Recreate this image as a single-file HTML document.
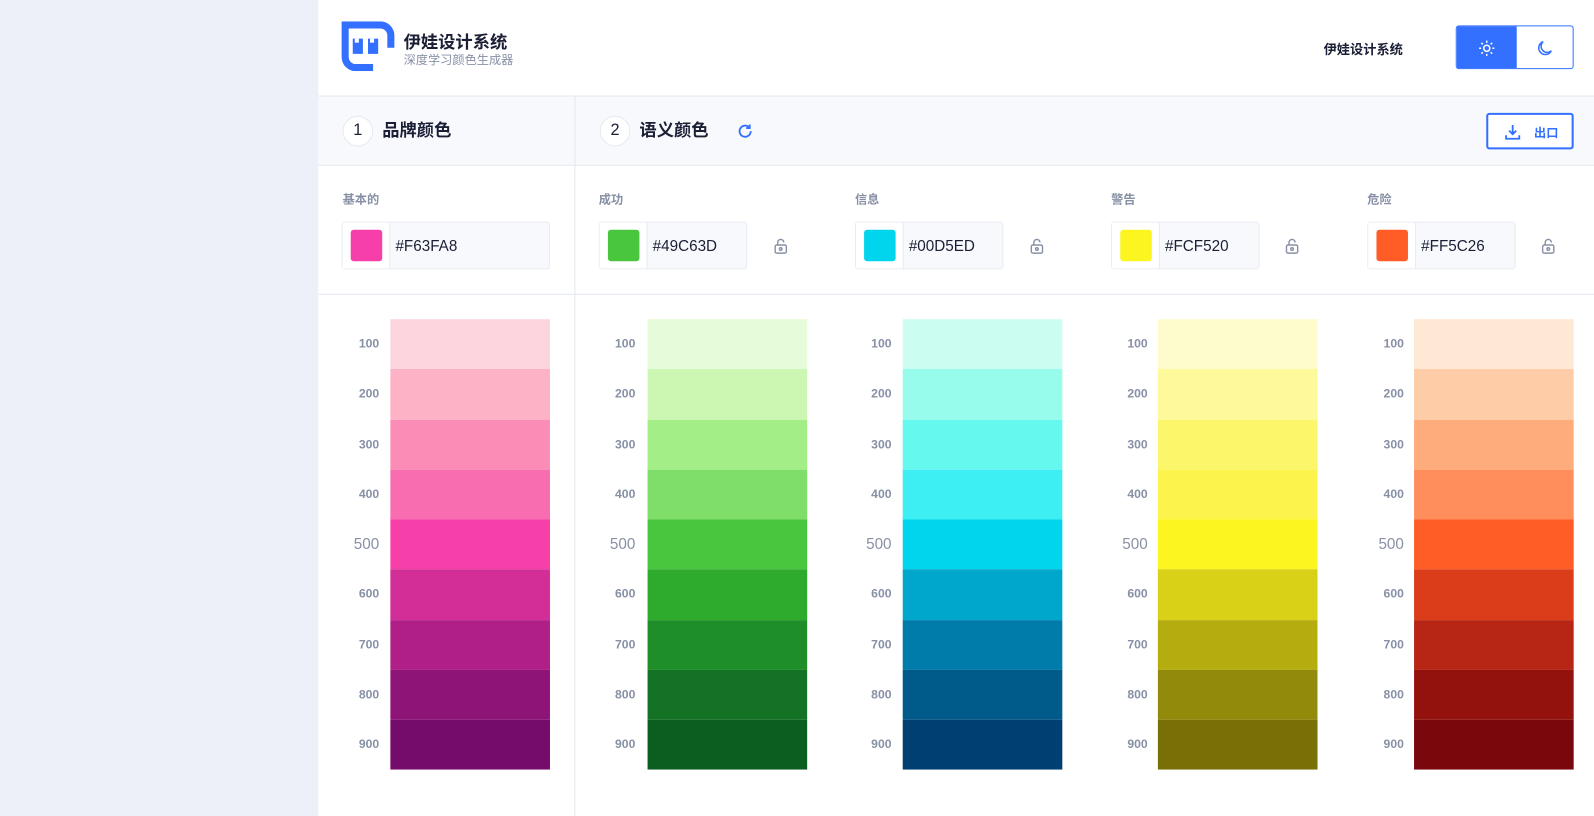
<!DOCTYPE html>
<html><head><meta charset="utf-8">
<style>
*{margin:0;padding:0;box-sizing:border-box}
html,body{width:1594px;height:816px;overflow:hidden;background:#fff}
body{font-family:"Liberation Sans","Noto Sans CJK SC",sans-serif;position:relative}
#w{position:absolute;left:0;top:0;width:1568px;height:803px;transform:scale(1.01658);transform-origin:0 0}
.side{position:absolute;left:0;top:0;width:313px;height:803px;background:#edf0f8}
.abs{position:absolute}
.hline{position:absolute;left:313px;right:0;height:1px;background:#e3e7f0}
.band{position:absolute;left:313px;right:0;top:95px;height:67px;background:#f8f9fc}
.vline{position:absolute;left:565px;top:95px;width:1px;height:708px;background:#e3e7f0}
.circ{position:absolute;width:30px;height:30px;border:1px solid #e6e9f0;border-radius:50%;background:#fff;text-align:center;line-height:28px;font-size:16px;color:#1a1f36}
.h2{position:absolute;font-size:17px;line-height:30px;font-weight:bold;color:#1a1f36}
.lab{position:absolute;font-size:12px;color:#8790a5;font-weight:bold}
.inp{position:absolute;height:47px;border:1px solid #e8ebf2;border-radius:3px;background:#f8f9fc}
.inp .sw{position:absolute;left:0;top:0;width:47px;height:45px;background:#fff;border-right:1px solid #e8ebf2}
.inp .sw i{position:absolute;left:8px;top:7px;width:31px;height:31px;border-radius:3px}
.inp span{position:absolute;left:52px;top:0;line-height:47px;font-size:15px;color:#1a1f36}
.lock{position:absolute;width:14px;height:16px}
.pal{position:absolute;top:314px;width:157px}
.pal div{height:49.25px}
.nums{position:absolute;top:314px;width:40px;text-align:right}
.nums div{height:49.25px;line-height:49.25px;font-size:12px;font-weight:bold;color:#8790a5}
.nums div.b{font-size:15px;font-weight:normal}
</style></head><body><div id="w">
<div class="side"></div>
<svg class="abs" style="left:336px;top:21px" width="52" height="49" viewBox="0 0 52 49">
<path d="M0 0H38A14 14 0 0 1 52 14V26H45V14A7 7 0 0 0 38 7H7V35A7 7 0 0 0 14 42H31V49H14A14 14 0 0 1 0 35Z" fill="#3370ff"/>
<rect x="11" y="17" width="10" height="15" fill="#3370ff"/><rect x="26" y="17" width="10" height="15" fill="#3370ff"/>
<rect x="13" y="17" width="4" height="4" fill="#fff"/><rect x="28" y="17" width="4" height="4" fill="#fff"/>
</svg>
<div class="abs" style="left:397px;top:27px;font-size:17px;font-weight:bold;color:#1a1f36">伊娃设计系统</div>
<div class="abs" style="left:397px;top:50px;font-size:12px;color:#8790a5">深度学习颜色生成器</div>
<div class="abs" style="left:1302px;top:38px;font-size:13px;font-weight:bold;color:#1a1f36">伊娃设计系统</div>
<div class="abs" style="left:1432px;top:25px;width:116px;height:43px;border:1px solid #3370ff;border-radius:3px;overflow:hidden;background:#fff">
<div style="position:absolute;left:0;top:0;width:59px;height:43px;background:#3370ff"></div>
<svg style="position:absolute;left:21px;top:13px" width="17" height="17" viewBox="0 0 17 17" stroke="#fff" stroke-width="1.5" fill="none"><circle cx="8.5" cy="8.5" r="3"/><path d="M8.5 1v2M8.5 14v2M1 8.5h2M14 8.5h2M3.2 3.2l1.4 1.4M12.4 12.4l1.4 1.4M3.2 13.8l1.4-1.4M12.4 4.6l1.4-1.4"/></svg>
<svg style="position:absolute;left:78px;top:13px" width="17" height="17" viewBox="0 0 17 17" stroke="#3370ff" stroke-width="1.5" fill="none"><path d="M7 2A6.5 6.5 0 1 0 15 11 5.5 5.5 0 0 1 7 2Z"/></svg>
</div>
<div class="hline" style="top:94px"></div>
<div class="band"></div>
<div class="hline" style="top:162px"></div>
<div class="hline" style="top:289px"></div>
<div class="vline"></div>
<div class="circ" style="left:337px;top:114px">1</div>
<div class="h2" style="left:376px;top:114px">品牌颜色</div>
<div class="circ" style="left:590px;top:114px">2</div>
<div class="h2" style="left:629px;top:114px">语义颜色</div>
<svg class="abs" style="left:725px;top:121px" width="16" height="16" viewBox="0 0 16 16" fill="none" stroke="#3370ff" stroke-width="1.8"><path d="M13.5 8A5.5 5.5 0 1 1 11.5 3.8"/><path d="M12.5 1.5v3.5H9" /></svg>
<div class="abs" style="left:1462px;top:111px;width:86px;height:36px;border:2px solid #3370ff;border-radius:3px;background:#fff">
<svg style="position:absolute;left:16px;top:9px" width="16" height="16" viewBox="0 0 16 16" fill="none" stroke="#3370ff" stroke-width="1.8"><path d="M8 1v9M4.5 6.5L8 10l3.5-3.5M1.5 11v3.5h13V11"/></svg>
<span style="position:absolute;left:45px;top:9px;font-size:12px;font-weight:bold;color:#3370ff">出口</span></div>

<div class="lab" style="left:337px;top:187px">基本的</div>
<div class="inp" style="left:336px;top:218px;width:205px"><div class="sw"><i style="background:#F63FA8"></i></div><span>#F63FA8</span></div>

<div class="lab" style="left:589px;top:187px">成功</div>
<div class="inp" style="left:589px;top:218px;width:146px"><div class="sw"><i style="background:#49C63D"></i></div><span>#49C63D</span></div>
<div class="lab" style="left:841px;top:187px">信息</div>
<div class="inp" style="left:841px;top:218px;width:146px"><div class="sw"><i style="background:#00D5ED"></i></div><span>#00D5ED</span></div>
<div class="lab" style="left:1093px;top:187px">警告</div>
<div class="inp" style="left:1093px;top:218px;width:146px"><div class="sw"><i style="background:#FCF520"></i></div><span>#FCF520</span></div>
<div class="lab" style="left:1345px;top:187px">危险</div>
<div class="inp" style="left:1345px;top:218px;width:146px"><div class="sw"><i style="background:#FF5C26"></i></div><span>#FF5C26</span></div>

<svg class="lock" style="left:761px;top:234px" viewBox="0 0 14 16" fill="none" stroke="#8790a5" stroke-width="1.4"><path d="M4 7V4.5a3 3 0 0 1 6 0"/><rect x="1.5" y="7" width="11" height="8" rx="1.5"/><circle cx="7" cy="11" r="1.3"/></svg>
<svg class="lock" style="left:1013px;top:234px" viewBox="0 0 14 16" fill="none" stroke="#8790a5" stroke-width="1.4"><path d="M4 7V4.5a3 3 0 0 1 6 0"/><rect x="1.5" y="7" width="11" height="8" rx="1.5"/><circle cx="7" cy="11" r="1.3"/></svg>
<svg class="lock" style="left:1264px;top:234px" viewBox="0 0 14 16" fill="none" stroke="#8790a5" stroke-width="1.4"><path d="M4 7V4.5a3 3 0 0 1 6 0"/><rect x="1.5" y="7" width="11" height="8" rx="1.5"/><circle cx="7" cy="11" r="1.3"/></svg>
<svg class="lock" style="left:1516px;top:234px" viewBox="0 0 14 16" fill="none" stroke="#8790a5" stroke-width="1.4"><path d="M4 7V4.5a3 3 0 0 1 6 0"/><rect x="1.5" y="7" width="11" height="8" rx="1.5"/><circle cx="7" cy="11" r="1.3"/></svg>

<div class="nums" style="left:333px"><div>100</div><div>200</div><div>300</div><div>400</div><div class="b">500</div><div>600</div><div>700</div><div>800</div><div>900</div></div>
<div class="nums" style="left:585px"><div>100</div><div>200</div><div>300</div><div>400</div><div class="b">500</div><div>600</div><div>700</div><div>800</div><div>900</div></div>
<div class="nums" style="left:837px"><div>100</div><div>200</div><div>300</div><div>400</div><div class="b">500</div><div>600</div><div>700</div><div>800</div><div>900</div></div>
<div class="nums" style="left:1089px"><div>100</div><div>200</div><div>300</div><div>400</div><div class="b">500</div><div>600</div><div>700</div><div>800</div><div>900</div></div>
<div class="nums" style="left:1341px"><div>100</div><div>200</div><div>300</div><div>400</div><div class="b">500</div><div>600</div><div>700</div><div>800</div><div>900</div></div>

<div class="pal" style="left:384px"><div style="background:#FDD5DF"></div><div style="background:#FDB2C6"></div><div style="background:#FB8CB6"></div><div style="background:#F86DAF"></div><div style="background:#F63FA8"></div><div style="background:#D32D98"></div><div style="background:#B01F88"></div><div style="background:#8E1478"></div><div style="background:#750B6B"></div></div>
<div class="pal" style="left:637px"><div style="background:#E6FBD9"></div><div style="background:#CCF7B3"></div><div style="background:#A4EE87"></div><div style="background:#7FDD6A"></div><div style="background:#49C63D"></div><div style="background:#2EAA2C"></div><div style="background:#1E8E29"></div><div style="background:#137224"></div><div style="background:#0B5E20"></div></div>
<div class="pal" style="left:888px"><div style="background:#CBFDF1"></div><div style="background:#98FCEC"></div><div style="background:#64F8EE"></div><div style="background:#3DEFF2"></div><div style="background:#00D5ED"></div><div style="background:#00A7CC"></div><div style="background:#007CAB"></div><div style="background:#005A8A"></div><div style="background:#003F71"></div></div>
<div class="pal" style="left:1139px"><div style="background:#FEFCCD"></div><div style="background:#FEFA9B"></div><div style="background:#FCF66A"></div><div style="background:#FCF34C"></div><div style="background:#FCF520"></div><div style="background:#D8D117"></div><div style="background:#B5AD10"></div><div style="background:#928A0A"></div><div style="background:#787006"></div></div>
<div class="pal" style="left:1391px"><div style="background:#FFE8D4"></div><div style="background:#FFCCA8"></div><div style="background:#FFAC7D"></div><div style="background:#FF8E5C"></div><div style="background:#FF5C26"></div><div style="background:#DB3D1B"></div><div style="background:#B72514"></div><div style="background:#93120D"></div><div style="background:#7A070B"></div></div>
</div></body></html>
